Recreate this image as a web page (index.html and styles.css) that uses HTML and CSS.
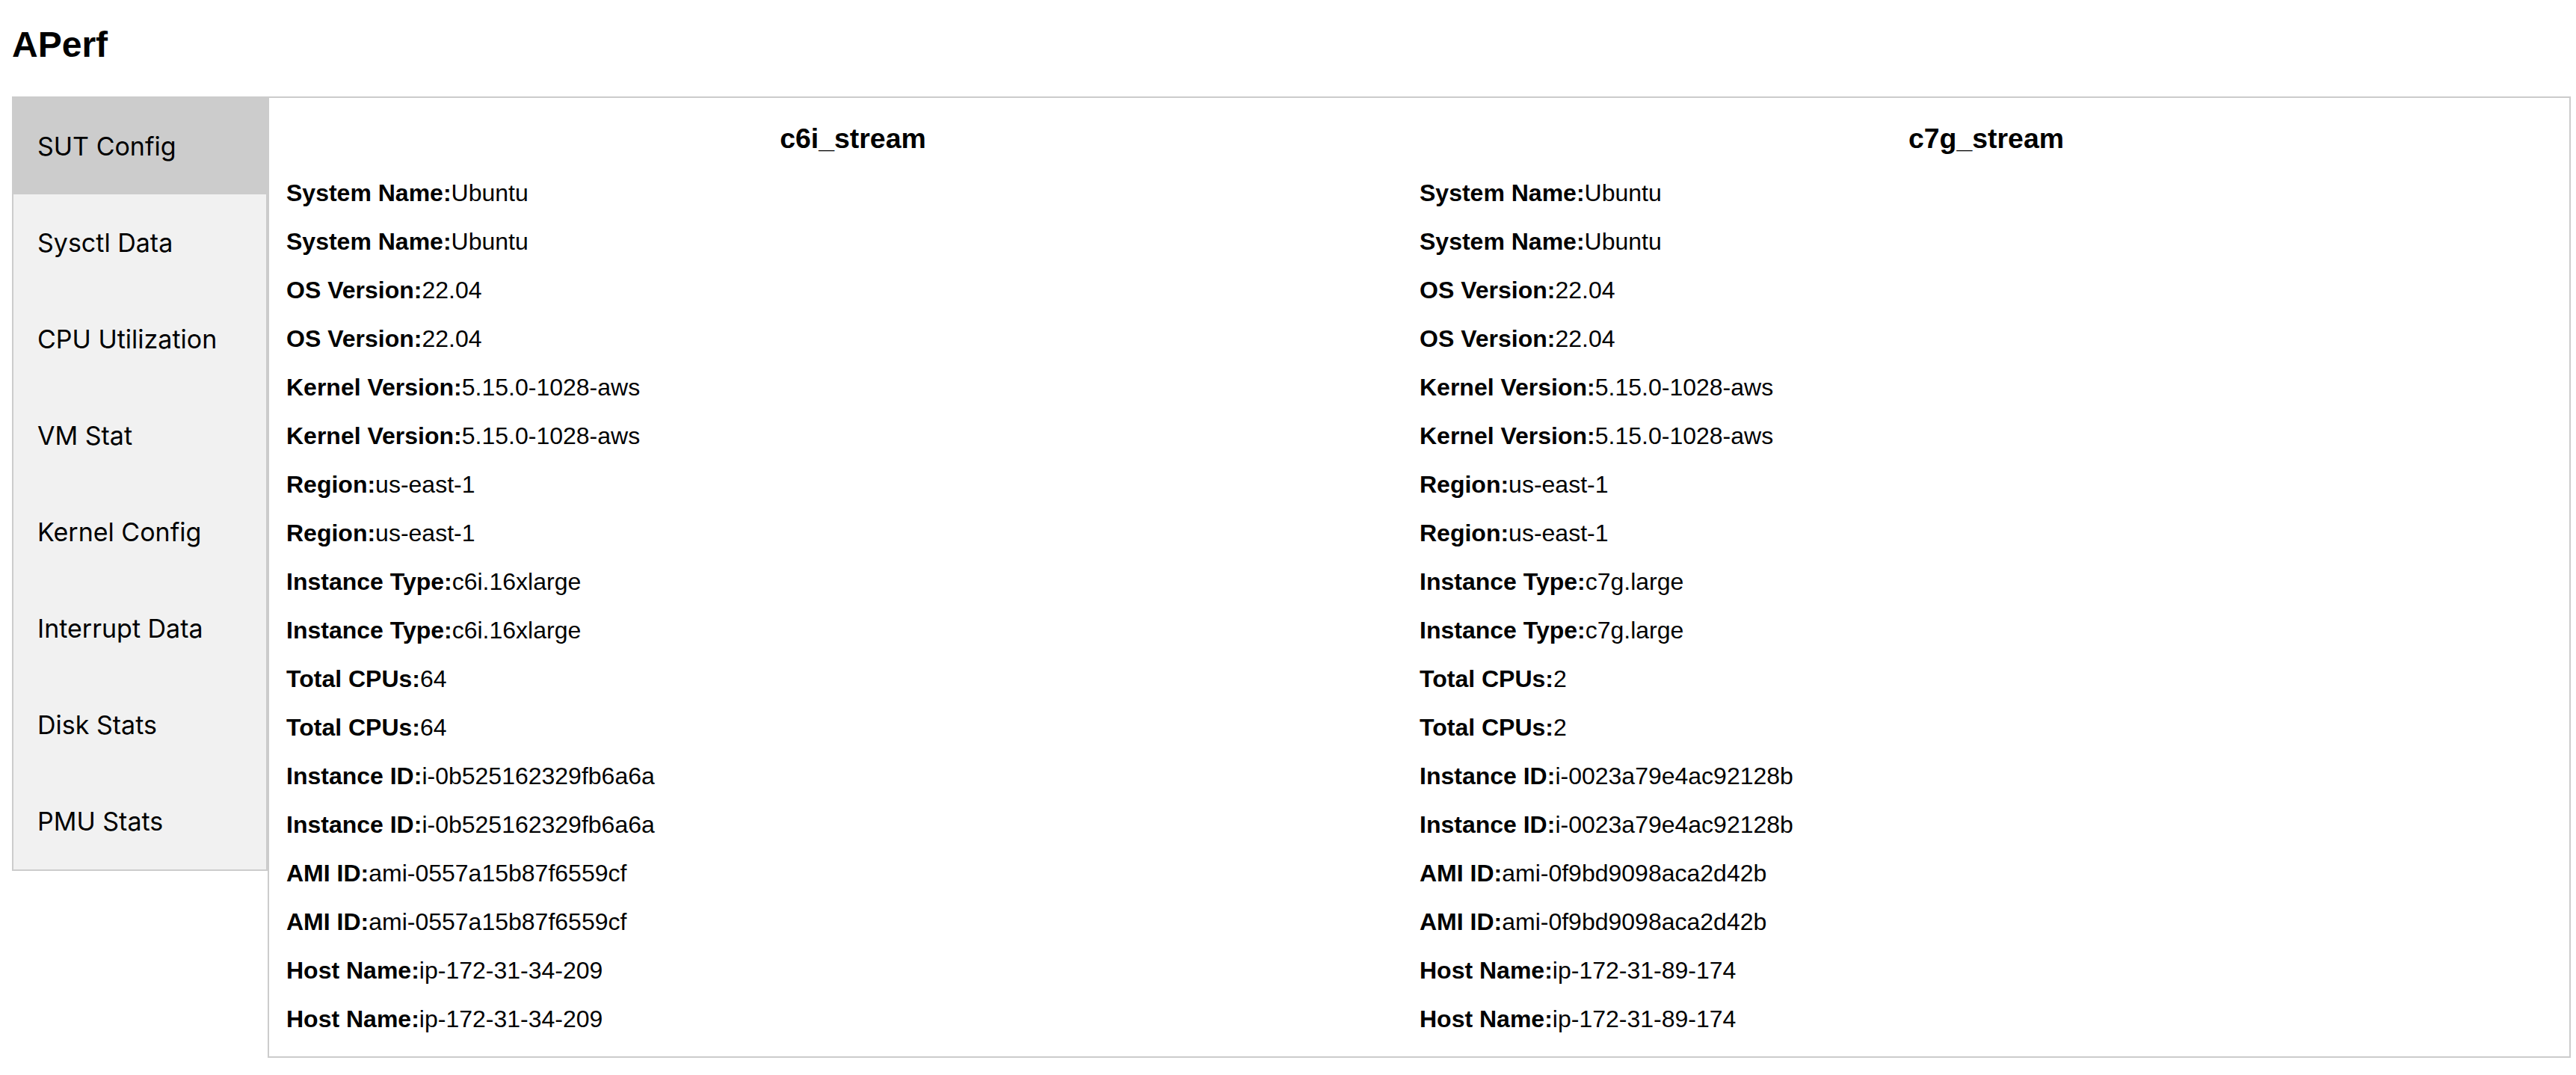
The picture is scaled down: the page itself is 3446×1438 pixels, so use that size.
FILE: index.html
```html
<!DOCTYPE html>
<html lang="en">
<head>
<meta charset="utf-8">
<title>APerf</title>
<link rel="stylesheet" href="styles.css">
</head>
<body>
<h2 class="title">APerf</h2>
<div class="layout">
  <nav class="tabs">
    <button class="tab active">SUT Config</button>
    <button class="tab">Sysctl Data</button>
    <button class="tab">CPU Utilization</button>
    <button class="tab">VM Stat</button>
    <button class="tab">Kernel Config</button>
    <button class="tab">Interrupt Data</button>
    <button class="tab">Disk Stats</button>
    <button class="tab">PMU Stats</button>
  </nav>
  <section class="content">
    <div class="run">
      <h3 class="run-title">c6i_stream</h3>
      <p class="row"><b>System Name:</b>Ubuntu</p>
      <p class="row"><b>System Name:</b>Ubuntu</p>
      <p class="row"><b>OS Version:</b>22.04</p>
      <p class="row"><b>OS Version:</b>22.04</p>
      <p class="row"><b>Kernel Version:</b>5.15.0-1028-aws</p>
      <p class="row"><b>Kernel Version:</b>5.15.0-1028-aws</p>
      <p class="row"><b>Region:</b>us-east-1</p>
      <p class="row"><b>Region:</b>us-east-1</p>
      <p class="row"><b>Instance Type:</b>c6i.16xlarge</p>
      <p class="row"><b>Instance Type:</b>c6i.16xlarge</p>
      <p class="row"><b>Total CPUs:</b>64</p>
      <p class="row"><b>Total CPUs:</b>64</p>
      <p class="row"><b>Instance ID:</b>i-0b525162329fb6a6a</p>
      <p class="row"><b>Instance ID:</b>i-0b525162329fb6a6a</p>
      <p class="row"><b>AMI ID:</b>ami-0557a15b87f6559cf</p>
      <p class="row"><b>AMI ID:</b>ami-0557a15b87f6559cf</p>
      <p class="row"><b>Host Name:</b>ip-172-31-34-209</p>
      <p class="row"><b>Host Name:</b>ip-172-31-34-209</p>
    </div>
    <div class="run">
      <h3 class="run-title">c7g_stream</h3>
      <p class="row"><b>System Name:</b>Ubuntu</p>
      <p class="row"><b>System Name:</b>Ubuntu</p>
      <p class="row"><b>OS Version:</b>22.04</p>
      <p class="row"><b>OS Version:</b>22.04</p>
      <p class="row"><b>Kernel Version:</b>5.15.0-1028-aws</p>
      <p class="row"><b>Kernel Version:</b>5.15.0-1028-aws</p>
      <p class="row"><b>Region:</b>us-east-1</p>
      <p class="row"><b>Region:</b>us-east-1</p>
      <p class="row"><b>Instance Type:</b>c7g.large</p>
      <p class="row"><b>Instance Type:</b>c7g.large</p>
      <p class="row"><b>Total CPUs:</b>2</p>
      <p class="row"><b>Total CPUs:</b>2</p>
      <p class="row"><b>Instance ID:</b>i-0023a79e4ac92128b</p>
      <p class="row"><b>Instance ID:</b>i-0023a79e4ac92128b</p>
      <p class="row"><b>AMI ID:</b>ami-0f9bd9098aca2d42b</p>
      <p class="row"><b>AMI ID:</b>ami-0f9bd9098aca2d42b</p>
      <p class="row"><b>Host Name:</b>ip-172-31-89-174</p>
      <p class="row"><b>Host Name:</b>ip-172-31-89-174</p>
    </div>
  </section>
</div>
</body>
</html>
```
FILE: styles.css
```css
html, body {
  background: #ffffff;
}

body {
  margin: 0;
  padding: 16px 0 0 16px;
  font-family: "Liberation Sans", Arial, Helvetica, sans-serif;
  font-size: 32px;
  color: #000000;
}

.title {
  margin: 16px 0 41px;
  font-size: 48px;
  line-height: 56px;
  font-weight: bold;
}

.layout {
  display: flex;
  align-items: flex-start;
}

.tabs {
  box-sizing: border-box;
  width: 342px;
  flex: none;
  display: flex;
  flex-direction: column;
  background: #f1f1f1;
  border: 2px solid #cccccc;
}

.tab {
  display: flex;
  align-items: center;
  box-sizing: border-box;
  height: 129px;
  width: 100%;
  padding: 0 32px;
  margin: 0;
  border: none;
  outline: none;
  background: inherit;
  color: #000000;
  text-align: left;
  font-family: Inter, "Noto Sans", sans-serif;
  font-size: 34px;
  line-height: 40px;
  cursor: pointer;
}

.tab.active {
  background: #cccccc;
}

.content {
  box-sizing: border-box;
  width: 3081px;
  flex: none;
  height: 1286px;
  border: 2px solid #cccccc;
  padding: 32px 22px 16px 23px;
  display: grid;
  grid-template-columns: 1fr 1fr;
  align-items: start;
}

.run {
  display: flex;
  flex-direction: column;
}

.run-title {
  margin: 0 0 19px;
  text-align: center;
  font-size: 37.44px;
  line-height: 44px;
  font-weight: bold;
}

.row {
  margin: 0;
  line-height: 65px;
  white-space: nowrap;
}

.row b {
  font-weight: bold;
}
```
